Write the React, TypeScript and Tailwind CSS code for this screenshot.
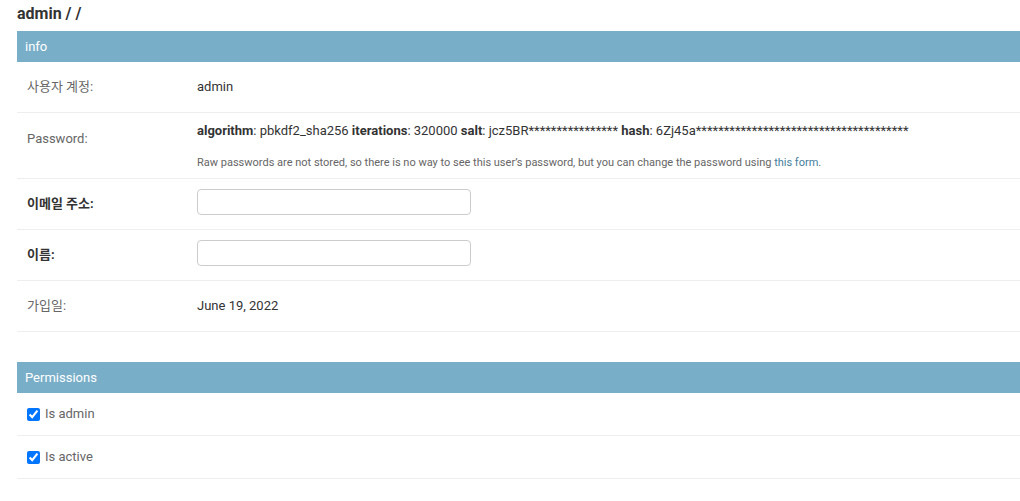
import React from "react";

type Row = {
  label: string;
  strong?: boolean;
  kind: "text" | "input" | "password";
  value?: string;
};

const rows: Row[] = [
  { label: "사용자 계정:", kind: "text", value: "admin" },
  { label: "Password:", kind: "password" },
  { label: "이메일 주소:", strong: true, kind: "input" },
  { label: "이름:", strong: true, kind: "input" },
  { label: "가입일:", kind: "text", value: "June 19, 2022" },
];

const font = { fontFamily: "Roboto, 'Noto Sans CJK KR', sans-serif" };

const Header: React.FC<{ title: string }> = ({ title }) => (
  <div className="h-[31px] bg-[#79aec8] text-white text-[13px] flex items-center px-2">{title}</div>
);

const App: React.FC = () => {
  return (
    <div className="w-[1020px] bg-white pl-[17px] text-[#333]" style={font}>
      <h2 className="h-[31px] pt-[2px] text-[16px] font-bold leading-[24px] text-[#333]">admin / /</h2>

      {/* info fieldset */}
      <div>
        <Header title="info" />
        {rows.map((row, idx) => (
          <div key={idx} className="flex border-b border-[#eee] px-[10px]">
            <div
              className={
                "w-[170px] shrink-0 flex text-[13px] " +
                (row.kind === "password" ? "items-start pt-[18px] leading-[16px] " : "items-center ") +
                (row.strong ? "font-bold text-[#333]" : "text-[#666]")
              }
            >
              {row.label}
            </div>
            {row.kind === "text" && (
              <div className="h-[50px] flex items-center text-[13px] text-[#333]">{row.value}</div>
            )}
            {row.kind === "input" && (
              <div className="h-[50px] pt-[10px]">
                <input
                  type="text"
                  className="block w-[274px] h-[26px] border border-[#ccc] rounded-[4px] bg-white"
                />
              </div>
            )}
            {row.kind === "password" && (
              <div className="h-[65px] pt-[9px]">
                <div className="text-[13px] leading-[18px] text-[#333]">
                  <b>algorithm</b>: pbkdf2_sha256 <b>iterations</b>: 320000 <b>salt</b>: jcz5BR****************{" "}
                  <b>hash</b>: 6Zj45a**************************************
                </div>
                <div className="mt-[16px] text-[11px] leading-[14px] text-[#666]">
                  Raw passwords are not stored, so there is no way to see this user’s password, but you can change the
                  password using <span className="text-[#447e9b]">this form</span>.
                </div>
              </div>
            )}
          </div>
        ))}
      </div>

      {/* permissions fieldset */}
      <div className="mt-[30px]">
        <Header title="Permissions" />
        {["Is admin", "Is active"].map((label) => (
          <div key={label} className="h-[43px] flex items-center gap-[5px] px-[10px] border-b border-[#eee]">
            <input type="checkbox" defaultChecked className="w-[13px] h-[13px] m-0 accent-[#0075ff]" />
            <span className="text-[13px] text-[#666]">{label}</span>
          </div>
        ))}
      </div>
    </div>
  );
};

export default App;
